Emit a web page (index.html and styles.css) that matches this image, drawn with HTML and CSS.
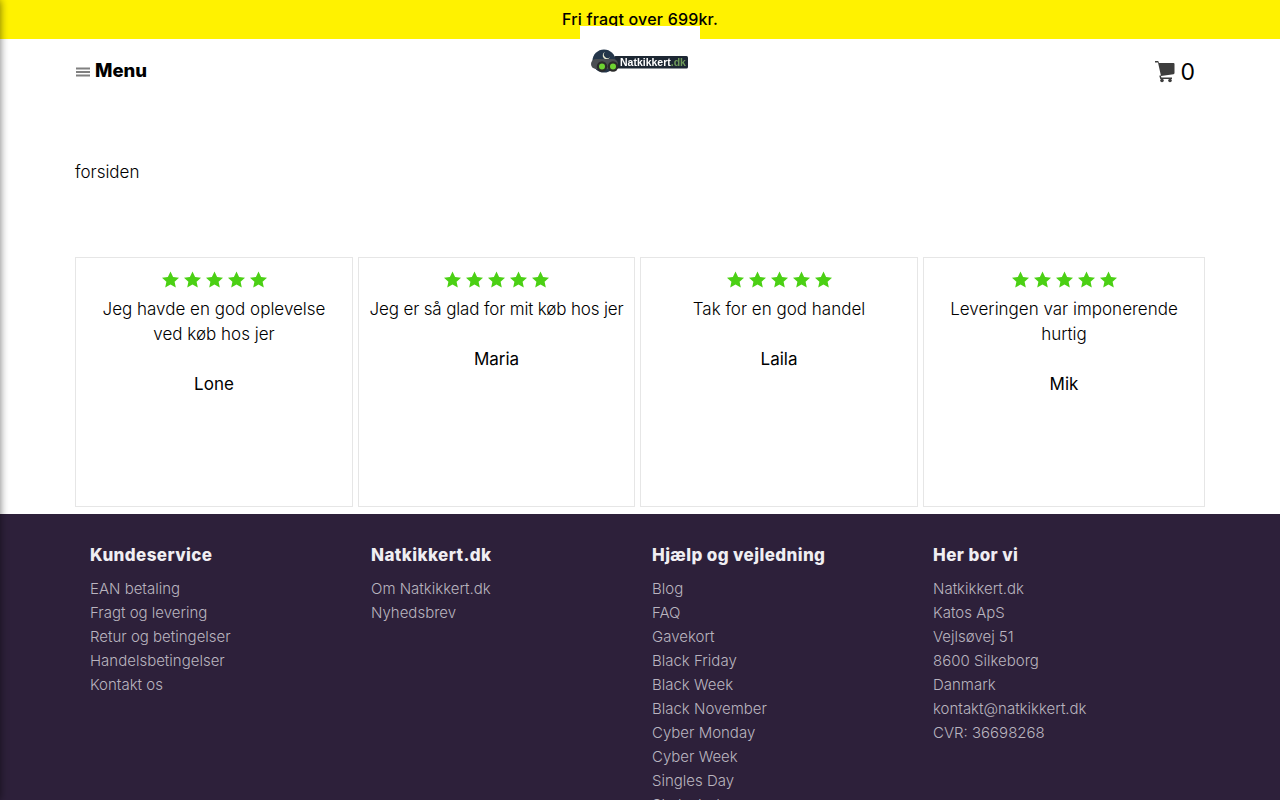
FILE: index.html
```html
<!DOCTYPE html>
<html lang="da">
<head>
<meta charset="utf-8">
<title>Natkikkert.dk</title>
<link rel="stylesheet" href="styles.css">
</head>
<body>
<svg class="defs" width="0" height="0"><defs><symbol id="star" viewBox="0 0 17 17"><path d="M8.500 .4l2.600 5.600 5.900.7-4.400 4 1.200 5.900-5.300-3-5.300 3 1.200-5.900-4.400-4 5.900-.7z"/></symbol></defs></svg>
<div class="drawer-shadow"></div>
<div class="topbar">Fri fragt over 699kr.</div>
<header class="header">
  <a class="menu">
    <svg class="menu-icon" viewBox="0 0 14 10" width="14" height="10"><path d="M0 1.500h14M0 5h14M0 8.500h14" stroke="#808080" stroke-width="1.800"/></svg>
    <span>Menu</span>
  </a>
  <a class="logo">
    <svg viewBox="0 0 120 79" width="120" height="79">
      <rect x="34" y="30" width="74" height="12.500" rx="1.500" fill="#1d2733"/>
      <circle cx="24" cy="35" r="11.500" fill="#24364a"/>
      <path d="M25 26a3.800 3.800 0 1 0 5 5a3.500 3.500 0 0 1-5-5z" fill="#e8e8d0"/>
      <rect x="11" y="33" width="27" height="10" rx="5" fill="#4a4e52"/>
      <circle cx="22" cy="40.500" r="5.200" fill="#2a2a2a"/><circle cx="22" cy="40.500" r="3" fill="#6ed232"/>
      <circle cx="33" cy="40.500" r="5.200" fill="#2a2a2a"/><circle cx="33" cy="40.500" r="3" fill="#6ed232"/>
      <text x="40" y="40" class="logo-text">Natkikkert<tspan class="logo-dk">.dk</tspan></text>
    </svg>
  </a>
  <a class="cart">
    <svg class="cart-icon" viewBox="0 0 20 22" width="20" height="22"><path d="M0 0h3.200l.8 2H18.500q1 0 1 1v9q0 1-1 1.200L6 15 3 1.500H0z" fill="#3d3d3d"/><path d="M5 14.500l.8 2.800H17" fill="none" stroke="#3d3d3d" stroke-width="1.500"/><circle cx="7" cy="19.500" r="1.800" fill="#3d3d3d"/><circle cx="15" cy="19.500" r="1.800" fill="#3d3d3d"/></svg>
    <span>0</span>
  </a>
</header>
<main class="main">
  <p class="crumb">forsiden</p>
  <section class="reviews">
    <article class="review">
      <div class="stars"><svg><use href="#star"/></svg><svg><use href="#star"/></svg><svg><use href="#star"/></svg><svg><use href="#star"/></svg><svg><use href="#star"/></svg></div>
      <p class="quote">Jeg havde en god oplevelse<br>ved køb hos jer</p>
      <p class="author">Lone</p>
    </article>
    <article class="review">
      <div class="stars"><svg><use href="#star"/></svg><svg><use href="#star"/></svg><svg><use href="#star"/></svg><svg><use href="#star"/></svg><svg><use href="#star"/></svg></div>
      <p class="quote tight">Jeg er så glad for mit køb hos jer</p>
      <p class="author">Maria</p>
    </article>
    <article class="review">
      <div class="stars"><svg><use href="#star"/></svg><svg><use href="#star"/></svg><svg><use href="#star"/></svg><svg><use href="#star"/></svg><svg><use href="#star"/></svg></div>
      <p class="quote">Tak for en god handel</p>
      <p class="author">Laila</p>
    </article>
    <article class="review">
      <div class="stars"><svg><use href="#star"/></svg><svg><use href="#star"/></svg><svg><use href="#star"/></svg><svg><use href="#star"/></svg><svg><use href="#star"/></svg></div>
      <p class="quote">Leveringen var imponerende<br>hurtig</p>
      <p class="author">Mik</p>
    </article>
  </section>
</main>
<footer class="footer">
  <div class="col">
    <h3>Kundeservice</h3>
    <a>EAN betaling</a><a>Fragt og levering</a><a>Retur og betingelser</a><a>Handelsbetingelser</a><a>Kontakt os</a>
  </div>
  <div class="col">
    <h3>Natkikkert.dk</h3>
    <a>Om Natkikkert.dk</a><a>Nyhedsbrev</a>
  </div>
  <div class="col">
    <h3>Hjælp og vejledning</h3>
    <a>Blog</a><a>FAQ</a><a>Gavekort</a><a>Black Friday</a><a>Black Week</a><a>Black November</a><a>Cyber Monday</a><a>Cyber Week</a><a>Singles Day</a><a>Skolestart</a>
  </div>
  <div class="col">
    <h3>Her bor vi</h3>
    <a>Natkikkert.dk</a><a>Katos ApS</a><a>Vejlsøvej 51</a><a>8600 Silkeborg</a><a>Danmark</a><a>kontakt@natkikkert.dk</a><a>CVR: 36698268</a>
  </div>
</footer>
</body>
</html>
```
FILE: styles.css
```css
html, body { margin: 0; padding: 0; height: 800px; overflow: hidden; background: #fff; }
body { font-family: "Inter", "Liberation Sans", sans-serif; color: #000; font-weight: 300; }
.defs { position: absolute; }
.drawer-shadow { position: fixed; left: -10px; top: 0; width: 10px; height: 800px; box-shadow: 0 0 8px rgba(0,0,0,.55); z-index: 5; }
.topbar { height: 39px; box-sizing: border-box; background: #fff200; text-align: center; font-size: 16px; font-weight: 500; line-height: 39px; letter-spacing: .2px; }
.header { height: 65px; position: relative; display: flex; justify-content: space-between; padding: 0 85px 0 76px; }
.menu { display: flex; align-items: center; gap: 5px; height: 62px; font-size: 18.5px; font-weight: 800; }
.menu-icon { margin-top: 3px; }
.logo { position: absolute; left: 580px; top: -13px; width: 120px; height: 79px; background: #fff; display: block; }
.logo svg { display: block; filter: blur(.3px); }
.logo-text { font: 700 10.5px "Liberation Sans", sans-serif; fill: #fff; }
.logo-dk { fill: #6f9a5a; }
.cart { display: flex; align-items: center; gap: 5px; height: 66px; font-size: 23px; font-weight: 400; }
.main { padding: 0 75px; }
.crumb { margin: 0; padding-top: 56px; font-size: 17px; line-height: 25px; }
.reviews { display: grid; grid-template-columns: 278px 277px 278px 282px; gap: 5px; margin-top: 72px; }
.review { box-sizing: border-box; height: 250px; border: 1px solid #e6e6e6; padding: 13px 0 0; text-align: center; font-size: 17px; line-height: 25px; }
.stars { display: flex; justify-content: center; gap: 5px; height: 17px; margin-bottom: 9px; }
.stars svg { width: 17px; height: 17px; fill: #4bd014; }
.quote { margin: 0 0 25px; }
.tight { letter-spacing: -.15px; }
.author { margin: 0; font-weight: 400; }
.footer { position: absolute; left: 0; right: 0; top: 514px; height: 286px; overflow: hidden; background: #2d203a; display: grid; grid-template-columns: repeat(4, 281px); padding: 29px 0 0 90px; box-sizing: border-box; }
.col h3 { margin: 0 0 9px; font-size: 17px; line-height: 25px; font-weight: 800; color: #f0eef2; letter-spacing: .4px; }
.col a { display: block; font-size: 15px; line-height: 24px; color: #b9b4bf; }
```
